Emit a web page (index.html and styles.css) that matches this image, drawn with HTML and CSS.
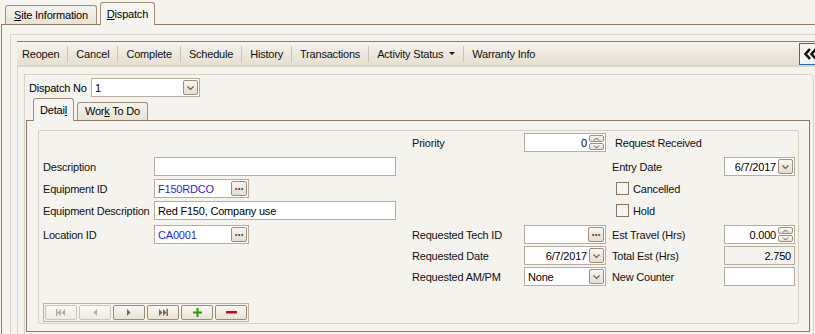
FILE: index.html
```html
<!DOCTYPE html>
<html lang="en">
<head>
    <meta charset="UTF-8">
    <title>Dispatch</title>
    <link rel="stylesheet" href="styles.css">
</head>
<body>
    <!-- Page Tabs -->
    <div class="page-tabs">
        <div class="page-tab"><u>S</u>ite Information</div>
        <div class="page-tab active"><u>D</u>ispatch</div>
    </div>

    <div class="page-panel">
        <div class="frame-outer">
            <!-- Toolbar -->
            <div class="toolbar">
                <span class="tool first">Reopen</span>
                <span class="tool">Cancel</span>
                <span class="tool">Complete</span>
                <span class="tool">Schedule</span>
                <span class="tool">History</span>
                <span class="tool">Transactions</span>
                <span class="tool">Activity Status <i class="caret"></i></span>
                <span class="tool">Warranty Info</span>
                <span class="collapse">
                    <svg width="16" height="12" viewBox="0 0 16 12"><path d="M7 1 L2.5 6 L7 11 M13 1 L8.5 6 L13 11" fill="none" stroke="#111" stroke-width="2.6"/></svg>
                </span>
            </div>

            <div class="frame-body">
                <div class="inner-panel">
                    <div class="dispatch-row">
                        <span class="dispatch-label">Dispatch No</span>
                        <div class="field combo">
                            <span class="value">1</span>
                            <span class="btn-drop"><svg width="9" height="6" viewBox="0 0 9 6"><path d="M1.5 1.5 L4.5 4.5 L7.5 1.5" fill="none" stroke="#6f5d4d" stroke-width="1.2"/></svg></span>
                        </div>
                    </div>

                    <!-- Detail Tabs -->
                    <div class="inner-tabs">
                        <div class="inner-tab active">Detai<u>l</u></div>
                        <div class="inner-tab">Wor<u>k</u> To Do</div>
                    </div>

                    <div class="tab-panel">
                        <div class="groupbox">
                            <div class="form-grid">
                                <!-- row 1 -->
                                <span></span><span></span><span></span>
                                <span class="label">Priority</span>
                                <div class="field num">
                                    <span class="value">0</span>
                                    <span class="spin">
                                        <span class="spin-btn"><svg width="7" height="4" viewBox="0 0 7 4"><path d="M1 3.5 L3.5 1 L6 3.5" fill="none" stroke="#6f5d4d"/></svg></span>
                                        <span class="spin-btn"><svg width="7" height="4" viewBox="0 0 7 4"><path d="M1 0.5 L3.5 3 L6 0.5" fill="none" stroke="#6f5d4d"/></svg></span>
                                    </span>
                                </div>
                                <span></span>
                                <span class="label wide indent">Request Received</span>

                                <!-- row 2 -->
                                <span class="label">Description</span>
                                <div class="field"><span class="value"></span></div>
                                <span></span><span></span><span></span><span></span>
                                <span class="label">Entry Date</span>
                                <div class="field num">
                                    <span class="value">6/7/2017</span>
                                    <span class="btn-drop"><svg width="9" height="6" viewBox="0 0 9 6"><path d="M1.5 1.5 L4.5 4.5 L7.5 1.5" fill="none" stroke="#6f5d4d" stroke-width="1.2"/></svg></span>
                                </div>

                                <!-- row 3 -->
                                <span class="label">Equipment ID</span>
                                <div class="field lookup short">
                                    <span class="value link">F150RDCO</span>
                                    <span class="btn-dots">&middot;&middot;&middot;</span>
                                </div>
                                <span></span><span></span><span></span><span></span>
                                <label class="check wide"><span class="box"></span>Cancelled</label>

                                <!-- row 4 -->
                                <span class="label">Equipment Description</span>
                                <div class="field"><span class="value">Red F150, Company use</span></div>
                                <span></span><span></span><span></span><span></span>
                                <label class="check wide"><span class="box"></span>Hold</label>

                                <!-- row 5 -->
                                <span class="label">Location ID</span>
                                <div class="field lookup short">
                                    <span class="value link">CA0001</span>
                                    <span class="btn-dots">&middot;&middot;&middot;</span>
                                </div>
                                <span></span>
                                <span class="label">Requested Tech ID</span>
                                <div class="field lookup">
                                    <span class="value"></span>
                                    <span class="btn-dots">&middot;&middot;&middot;</span>
                                </div>
                                <span></span>
                                <span class="label">Est Travel (Hrs)</span>
                                <div class="field num">
                                    <span class="value">0.000</span>
                                    <span class="spin">
                                        <span class="spin-btn"><svg width="7" height="4" viewBox="0 0 7 4"><path d="M1 3.5 L3.5 1 L6 3.5" fill="none" stroke="#6f5d4d"/></svg></span>
                                        <span class="spin-btn"><svg width="7" height="4" viewBox="0 0 7 4"><path d="M1 0.5 L3.5 3 L6 0.5" fill="none" stroke="#6f5d4d"/></svg></span>
                                    </span>
                                </div>

                                <!-- row 6 -->
                                <span></span><span></span><span></span>
                                <span class="label">Requested Date</span>
                                <div class="field num">
                                    <span class="value">6/7/2017</span>
                                    <span class="btn-drop"><svg width="9" height="6" viewBox="0 0 9 6"><path d="M1.5 1.5 L4.5 4.5 L7.5 1.5" fill="none" stroke="#6f5d4d" stroke-width="1.2"/></svg></span>
                                </div>
                                <span></span>
                                <span class="label">Total Est (Hrs)</span>
                                <div class="field num readonly"><span class="value">2.750</span></div>

                                <!-- row 7 -->
                                <span></span><span></span><span></span>
                                <span class="label">Requested AM/PM</span>
                                <div class="field">
                                    <span class="value">None</span>
                                    <span class="btn-drop"><svg width="9" height="6" viewBox="0 0 9 6"><path d="M1.5 1.5 L4.5 4.5 L7.5 1.5" fill="none" stroke="#6f5d4d" stroke-width="1.2"/></svg></span>
                                </div>
                                <span></span>
                                <span class="label">New Counter</span>
                                <div class="field"><span class="value"></span></div>
                            </div>

                            <!-- Record Navigator -->
                            <div class="navigator">
                                <span class="nav-btn disabled"><svg width="10" height="7" viewBox="0 0 10 7"><path d="M0 0h1.5v7H0z M5 0v7L1.5 3.5z M9 0v7L5.5 3.5z" fill="#b3aba2"/></svg></span>
                                <span class="nav-btn disabled"><svg width="4" height="7" viewBox="0 0 4 7"><path d="M4 0v7L0.5 3.5z" fill="#b3aba2"/></svg></span>
                                <span class="nav-btn"><svg width="4" height="7" viewBox="0 0 4 7"><path d="M0 0v7L3.5 3.5z" fill="#7a6756"/></svg></span>
                                <span class="nav-btn"><svg width="10" height="7" viewBox="0 0 10 7"><path d="M1 0v7L4.5 3.5z M5 0v7L8.5 3.5z M8.5 0h1.5v7H8.5z" fill="#7a6756"/></svg></span>
                                <span class="nav-btn"><svg width="9" height="9" viewBox="0 0 9 9"><path d="M3.5 0h2v3.5H9v2H5.5V9h-2V5.5H0v-2h3.5z" fill="#2f9a07"/></svg></span>
                                <span class="nav-btn"><svg width="11" height="3" viewBox="0 0 11 3"><path d="M0 0h11v2.5H0z" fill="#e00000"/></svg></span>
                            </div>
                        </div>
                    </div>
                </div>
            </div>
        </div>
    </div>
</body>
</html>
```

FILE: styles.css
```css
/* General Reset */
* {
    box-sizing: border-box;
}

body {
    margin: 0;
    width: 815px;
    height: 334px;
    overflow: hidden;
    background: #f5f3ee;
    font-family: "Liberation Sans", Arial, sans-serif;
    font-size: 11px;
    letter-spacing: -0.2px;
    color: #000;
}

u {
    text-decoration: underline;
    text-underline-offset: 1px;
}

/* Page Tabs */
.page-tabs {
    display: flex;
    align-items: flex-end;
    gap: 3px;
    height: 24px;
    padding-left: 5px;
}

.page-tab {
    height: 19px;
    padding: 3px 8px 0 8px;
    border: 1px solid #a38e7a;
    border-bottom: none;
    border-radius: 3px 3px 0 0;
    background: linear-gradient(#f6f3ee, #e9e3d7);
}

.page-tab.active {
    position: relative;
    z-index: 1;
    height: 23px;
    margin-bottom: -1px;
    padding: 5px 6px 0 6px;
    background: #f7f5f1;
}

.page-panel {
    height: 310px;
    margin-left: 1px;
    padding: 9px 0 0 8px;
    overflow: hidden;
    border-top: 1px solid #8f7a67;
    border-left: 1px solid #8f7a67;
}

.frame-outer {
    height: 300px;
    padding: 6px 0 0 6px;
    border-top: 1px solid #ddd6ca;
    border-left: 1px solid #ddd6ca;
}

/* Toolbar */
.toolbar {
    display: flex;
    align-items: center;
    height: 25px;
    border-top: 1px solid #8f7a67;
    border-bottom: 1px solid #ddd6ca;
    background: linear-gradient(#f7f5f0, #ece7dc 55%, #e6e0d1);
}

.tool {
    display: flex;
    align-items: center;
    height: 16px;
    padding: 0 8px;
    border-left: 1px solid #cdc4b7;
    color: #111;
}

.tool.first {
    padding-left: 5px;
    border-left: none;
}

.caret {
    display: inline-block;
    margin-left: 6px;
    border-left: 3px solid transparent;
    border-right: 3px solid transparent;
    border-top: 3px solid #111;
}

.collapse {
    display: flex;
    align-items: center;
    justify-content: center;
    width: 24px;
    height: 22px;
    margin-left: auto;
    margin-right: -8px;
    border: 1px solid #1f6fcf;
    background: #f7f5f0;
}

.frame-body {
    height: 268px;
    padding: 7px 0 0 6px;
    border-top: 1px solid #ddd6ca;
    border-left: 1px solid #ddd6ca;
}

.inner-panel {
    width: 790px;
    height: 262px;
    padding-top: 3px;
    border: 1px solid #d8d0c3;
    border-bottom: none;
    border-radius: 0 5px 0 0;
}

.dispatch-row {
    display: flex;
    align-items: center;
    height: 19px;
    margin-left: 4px;
}

.dispatch-label {
    width: 62px;
}

.field.combo {
    width: 109px;
}

/* Inner Tabs */
.inner-tabs {
    display: flex;
    align-items: flex-end;
    gap: 3px;
    height: 23px;
    margin-left: 8px;
}

.inner-tab {
    height: 18px;
    padding: 2px 7px 0 7px;
    border: 1px solid #a38e7a;
    border-bottom: none;
    border-radius: 3px 3px 0 0;
    background: linear-gradient(#f6f3ee, #e9e3d7);
}

.inner-tab.active {
    position: relative;
    z-index: 1;
    height: 23px;
    margin-bottom: -1px;
    padding: 5px 6px 0 6px;
    background: #f6f4f0;
}

.tab-panel {
    width: 784px;
    height: 212px;
    margin-left: 1px;
    padding: 9px 0 0 11px;
    border: 1px solid #8f7a67;
}

.groupbox {
    display: flex;
    flex-direction: column;
    align-items: flex-start;
    width: 761px;
    height: 194px;
    padding: 2px 0 1px 4px;
    border: 1px solid #d8d0c3;
    border-radius: 2px;
}

/* Form Layout */
.form-grid {
    display: grid;
    grid-template-columns: 111px 242px 16px 112px 82px 6px 112px 71px;
    grid-template-rows: 24px 22px 22px 24px 21px 21px 19px;
}

.label {
    display: flex;
    align-items: center;
    height: 19px;
    white-space: nowrap;
    color: #111;
}

.wide {
    grid-column: span 2;
}

.indent {
    padding-left: 3px;
}

.field {
    display: flex;
    align-items: center;
    height: 19px;
    padding: 0 1px 0 3px;
    border: 1px solid #b7ac9f;
    background: #fff;
    white-space: nowrap;
}

.field .value {
    flex: 1;
    overflow: hidden;
}

.field.num .value {
    padding-right: 2px;
    text-align: right;
}

.field.short {
    width: 95px;
}

.field.readonly {
    background: #f5f3ee;
}

.link {
    color: #1f1fe6;
}

.btn-drop,
.btn-dots {
    display: flex;
    align-items: center;
    justify-content: center;
    width: 15px;
    height: 15px;
    border: 1px solid #a28d79;
    border-radius: 2px;
    background: linear-gradient(#f8f6f1, #e4ddd0);
}

.btn-dots {
    width: 16px;
    font-size: 12px;
    font-weight: bold;
    line-height: 1;
    letter-spacing: -1px;
    color: #5d4c3d;
}

.spin {
    display: flex;
    flex-direction: column;
    gap: 1px;
}

.spin-btn {
    display: flex;
    align-items: center;
    justify-content: center;
    width: 15px;
    height: 7px;
    border: 1px solid #a28d79;
    border-radius: 2px;
    background: linear-gradient(#f8f6f1, #e6dfd3);
}

.check {
    display: flex;
    align-items: center;
    gap: 4px;
    height: 19px;
    padding-left: 4px;
    color: #111;
}

.check .box {
    width: 13px;
    height: 13px;
    border: 1px solid #8c7663;
    background: #f6f4f0;
}

/* Record Navigator */
.navigator {
    display: flex;
    gap: 2px;
    margin-top: auto;
    padding: 1px;
    border: 1px solid #bab2a7;
}

.nav-btn {
    display: flex;
    align-items: center;
    justify-content: center;
    width: 32px;
    height: 15px;
    border: 1px solid #9e8a77;
    border-radius: 2px;
    background: linear-gradient(#faf8f4, #e8e2d6);
}

.nav-btn.disabled {
    border-color: #cdc5ba;
    background: linear-gradient(#fbfaf7, #efebe4);
}
```
